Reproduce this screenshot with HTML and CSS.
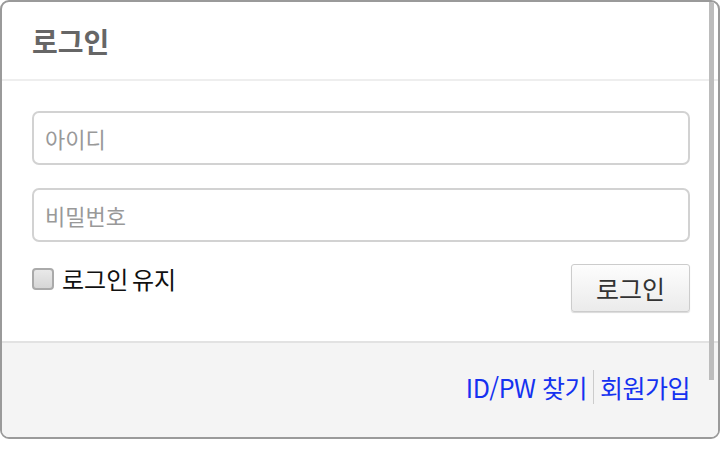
FILE: index.html
```html
<!doctype html>
<html lang="ko">
  <head>
    <meta charset="UTF-8" />
    <meta name="viewport" content="width=device-width, initial-scale=1.0" />
    <title>로그인</title>
    <link rel="stylesheet" href="styles.css">
  </head>
  <body>
    <div class="dialog">
      <div class="dialog-head">
        <h1 class="dialog-title">로그인</h1>
      </div>
      <form class="dialog-body">
        <input class="field" type="text" placeholder="아이디" />
        <input class="field" type="password" placeholder="비밀번호" />
        <div class="row">
          <label class="keep">
            <span class="check"></span>
            로그인 유지
          </label>
          <button class="btn-login" type="button">로그인</button>
        </div>
      </form>
      <div class="dialog-foot">
        <a href="#">ID/PW 찾기</a>
        <span class="sep"></span>
        <a href="#">회원가입</a>
      </div>
      <div class="scrollbar"></div>
    </div>
  </body>
</html>
```

FILE: styles.css
```css
html,
body {
  margin: 0;
  padding: 0;
  background: #fff;
}
body,
input,
button {
  font-family: "Noto Sans CJK KR", "Noto Sans", sans-serif;
}
.dialog {
  position: relative;
  width: 716px;
  height: 435px;
  border: 2px solid #9a9a9a;
  border-radius: 9px;
  overflow: hidden;
  display: flex;
  flex-direction: column;
  background: #fff;
}
.dialog-head {
  height: 77px;
  border-bottom: 2px solid #eee;
  display: flex;
  align-items: center;
  padding: 0 30px;
}
.dialog-title {
  margin: 0;
  font-size: 28px;
  font-weight: bold;
  color: #666;
}
.dialog-body {
  display: flex;
  flex-direction: column;
  gap: 23px;
  padding: 30px 28px 29px 30px;
}
.field {
  height: 54px;
  box-sizing: border-box;
  border: 2px solid #d2d2d2;
  border-radius: 7px;
  padding: 0 11px;
  font-size: 22px;
  color: #333;
  outline: none;
}
.field::placeholder {
  color: #999;
}
.row {
  display: flex;
  justify-content: space-between;
  align-items: flex-start;
  margin-top: -1px;
}
.keep {
  display: flex;
  align-items: center;
  gap: 8px;
  font-size: 24px;
  line-height: 30px;
  word-spacing: -3px;
  color: #111;
}
.check {
  width: 18px;
  height: 18px;
  border: 2px solid #aaa;
  border-radius: 4px;
  background: linear-gradient(#e9e9e9, #d6d6d6);
}
.btn-login {
  width: 119px;
  height: 48px;
  border: 1px solid #ccc;
  border-radius: 3px;
  background: linear-gradient(#fdfdfd, #ebebeb);
  box-shadow: 0 1px 1px rgba(0, 0, 0, 0.15);
  font-size: 25px;
  color: #333;
}
.dialog-foot {
  flex: 1;
  background: #f4f4f4;
  border-top: 2px solid #e2e2e2;
  display: flex;
  justify-content: flex-end;
  align-items: center;
  gap: 6px;
  padding: 0 28px 6px 0;
}
.dialog-foot a {
  color: #1532f0;
  text-decoration: none;
  font-size: 25px;
  letter-spacing: -0.5px;
}
.sep {
  width: 1px;
  height: 34px;
  background: #ccc;
}
.scrollbar {
  position: absolute;
  top: 0;
  right: 4px;
  width: 5px;
  height: 378px;
  background: #bcbcbc;
}
```
